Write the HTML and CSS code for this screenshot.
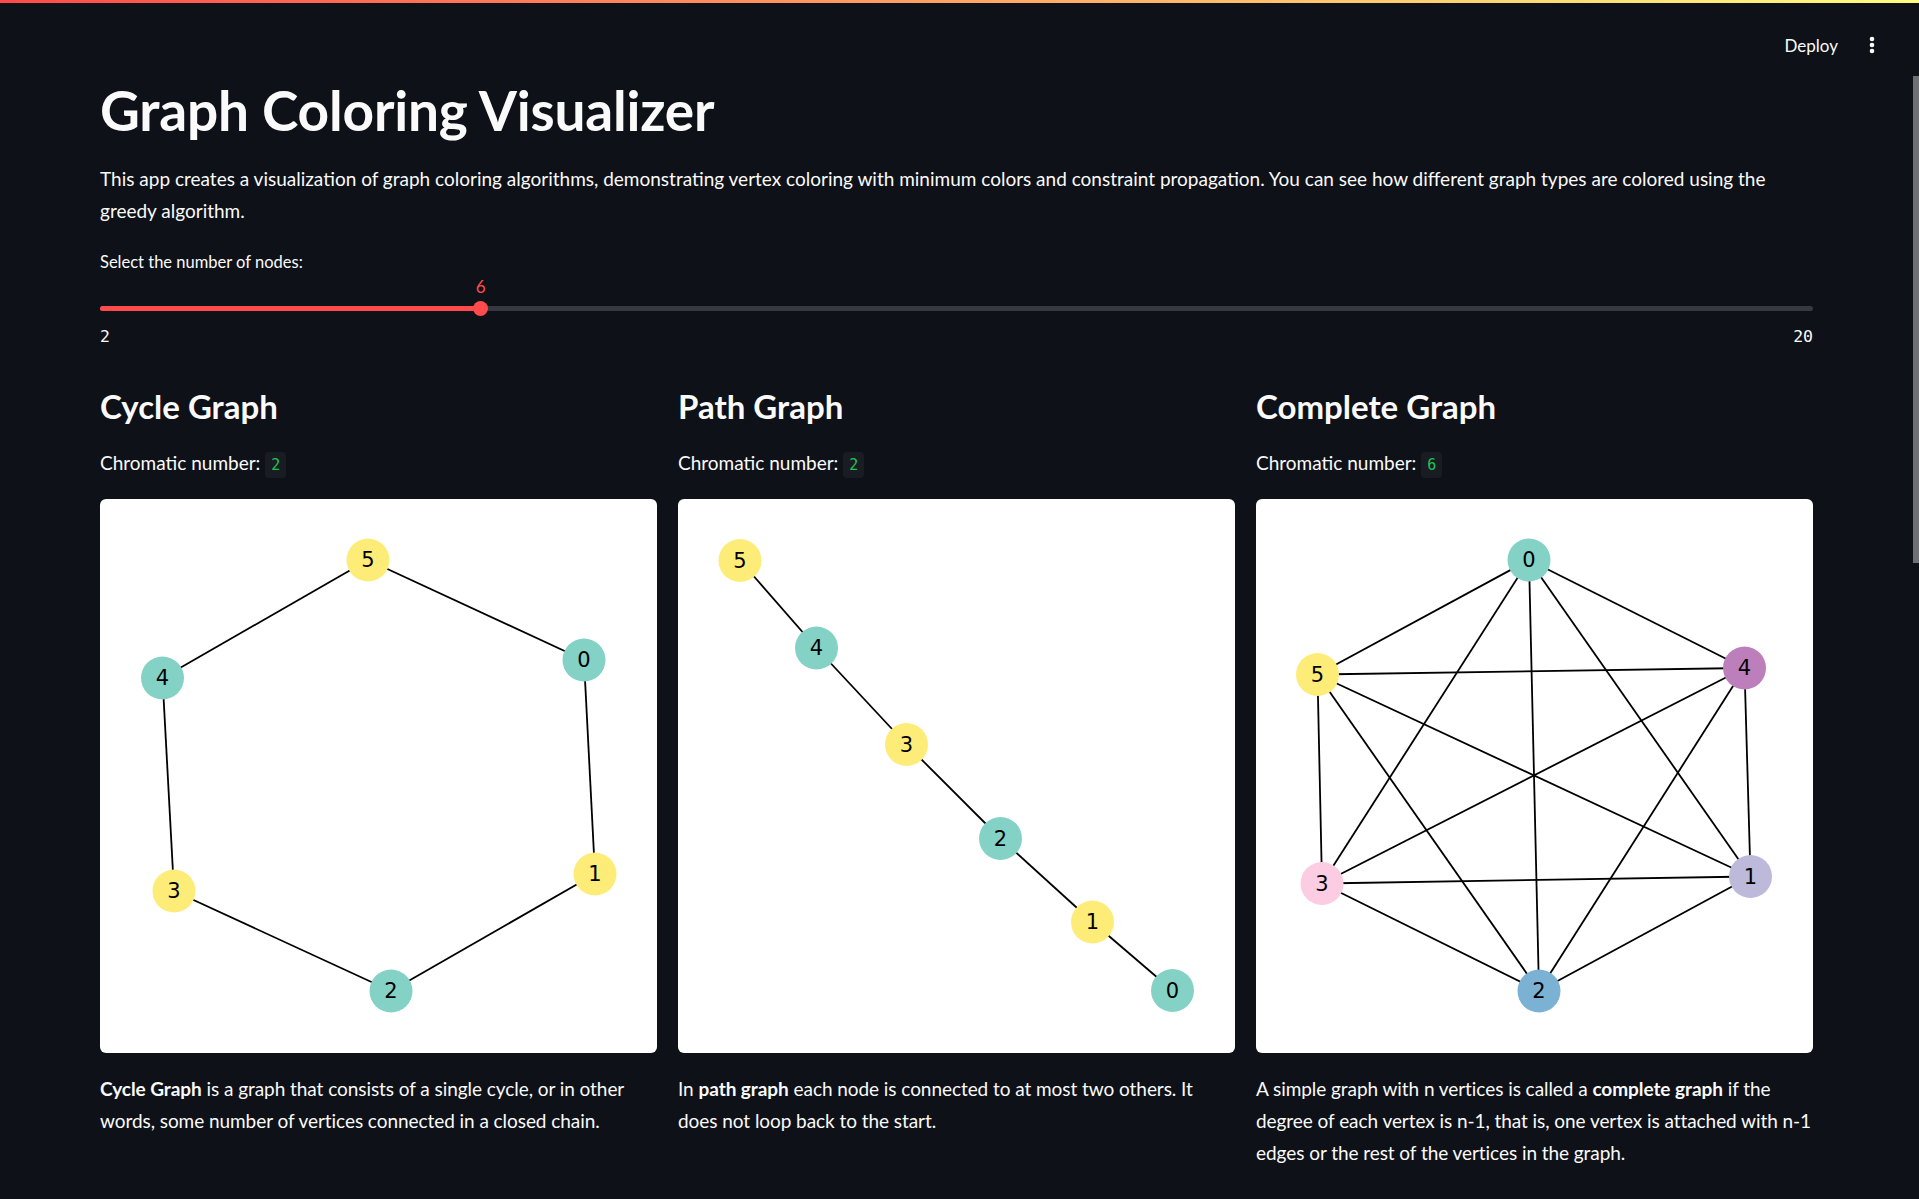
FILE: index.html
```html
<!DOCTYPE html>
<html lang="en">
<head>
<meta charset="utf-8">
<title>Graph Coloring Visualizer</title>
<link rel="stylesheet" href="styles.css">
</head>
<body>
<header class="app-header">
  <div class="decoration"></div>
  <div class="toolbar">
    <span class="deploy">Deploy</span>
    <svg class="menu" width="8" height="20" viewBox="0 0 8 20"><circle cx="4" cy="4" r="2.3" fill="#fafafa"/><circle cx="4" cy="10" r="2.3" fill="#fafafa"/><circle cx="4" cy="16" r="2.3" fill="#fafafa"/></svg>
  </div>
</header>
<div class="scrollbar"></div>
<main class="block">
  <h1 class="title">Graph Coloring Visualizer</h1>
  <p class="intro">This app creates a visualization of graph coloring algorithms, demonstrating vertex coloring with minimum colors and constraint propagation. You can see how different graph types are colored using the greedy algorithm.</p>

  <div class="slider">
    <div class="slider-label">Select the number of nodes:</div>
    <div class="slider-body">
      <div class="track"><div class="fill" style="width:22.22%"></div></div>
      <div class="thumb" style="left:22.22%"></div>
      <div class="thumb-value" style="left:22.22%">6</div>
    </div>
    <div class="ticks"><span>2</span><span>20</span></div>
  </div>

  <div class="columns">
    <section class="col">
      <h3>Cycle Graph</h3>
      <p class="chrom">Chromatic number: <code>2</code></p>
      <div class="card">
        <svg viewBox="0 0 557 554" width="557" height="554">
          <g class="edges">
            <line x1="484" y1="161" x2="495" y2="375"/>
            <line x1="495" y1="375" x2="291" y2="492"/>
            <line x1="291" y1="492" x2="74" y2="392"/>
            <line x1="74" y1="392" x2="62.5" y2="179"/>
            <line x1="62.5" y1="179" x2="268" y2="61"/>
            <line x1="268" y1="61" x2="484" y2="161"/>
          </g>
          <g class="nodes">
            <circle cx="484" cy="161" r="21.5" fill="#84d2c6"/><text x="484" y="161">0</text>
            <circle cx="495" cy="375" r="21.5" fill="#feec78"/><text x="495" y="375">1</text>
            <circle cx="291" cy="492" r="21.5" fill="#84d2c6"/><text x="291" y="492">2</text>
            <circle cx="74" cy="392" r="21.5" fill="#feec78"/><text x="74" y="392">3</text>
            <circle cx="62.5" cy="179" r="21.5" fill="#84d2c6"/><text x="62.5" y="179">4</text>
            <circle cx="268" cy="61" r="21.5" fill="#feec78"/><text x="268" y="61">5</text>
          </g>
        </svg>
      </div>
      <p class="caption"><strong>Cycle Graph</strong> is a graph that consists of a single cycle, or in other words, some number of vertices connected in a closed chain.</p>
    </section>

    <section class="col">
      <h3>Path Graph</h3>
      <p class="chrom">Chromatic number: <code>2</code></p>
      <div class="card">
        <svg viewBox="0 0 557 554" width="557" height="554">
          <g class="edges">
            <line x1="62" y1="61.5" x2="138.5" y2="149"/>
            <line x1="138.5" y1="149" x2="228.5" y2="245.5"/>
            <line x1="228.5" y1="245.5" x2="322.5" y2="339.5"/>
            <line x1="322.5" y1="339.5" x2="414.5" y2="423"/>
            <line x1="414.5" y1="423" x2="494.5" y2="491.5"/>
          </g>
          <g class="nodes">
            <circle cx="494.5" cy="491.5" r="21.5" fill="#84d2c6"/><text x="494.5" y="491.5">0</text>
            <circle cx="414.5" cy="423" r="21.5" fill="#feec78"/><text x="414.5" y="423">1</text>
            <circle cx="322.5" cy="339.5" r="21.5" fill="#84d2c6"/><text x="322.5" y="339.5">2</text>
            <circle cx="228.5" cy="245.5" r="21.5" fill="#feec78"/><text x="228.5" y="245.5">3</text>
            <circle cx="138.5" cy="149" r="21.5" fill="#84d2c6"/><text x="138.5" y="149">4</text>
            <circle cx="62" cy="61.5" r="21.5" fill="#feec78"/><text x="62" y="61.5">5</text>
          </g>
        </svg>
      </div>
      <p class="caption">In <strong>path graph</strong> each node is connected to at most two others. It does not loop back to the start.</p>
    </section>

    <section class="col">
      <h3>Complete Graph</h3>
      <p class="chrom">Chromatic number: <code>6</code></p>
      <div class="card">
        <svg viewBox="0 0 557 554" width="557" height="554">
          <g class="edges">
            <line x1="273" y1="61" x2="494.5" y2="377.5"/>
            <line x1="273" y1="61" x2="283" y2="492"/>
            <line x1="273" y1="61" x2="66" y2="384.5"/>
            <line x1="273" y1="61" x2="488.5" y2="169"/>
            <line x1="273" y1="61" x2="61.5" y2="175.5"/>
            <line x1="494.5" y1="377.5" x2="283" y2="492"/>
            <line x1="494.5" y1="377.5" x2="66" y2="384.5"/>
            <line x1="494.5" y1="377.5" x2="488.5" y2="169"/>
            <line x1="494.5" y1="377.5" x2="61.5" y2="175.5"/>
            <line x1="283" y1="492" x2="66" y2="384.5"/>
            <line x1="283" y1="492" x2="488.5" y2="169"/>
            <line x1="283" y1="492" x2="61.5" y2="175.5"/>
            <line x1="66" y1="384.5" x2="488.5" y2="169"/>
            <line x1="66" y1="384.5" x2="61.5" y2="175.5"/>
            <line x1="488.5" y1="169" x2="61.5" y2="175.5"/>
          </g>
          <g class="nodes">
            <circle cx="273" cy="61" r="21.5" fill="#84d2c6"/><text x="273" y="61">0</text>
            <circle cx="494.5" cy="377.5" r="21.5" fill="#bdb9da"/><text x="494.5" y="377.5">1</text>
            <circle cx="283" cy="492" r="21.5" fill="#7bb2d4"/><text x="283" y="492">2</text>
            <circle cx="66" cy="384.5" r="21.5" fill="#fccce3"/><text x="66" y="384.5">3</text>
            <circle cx="488.5" cy="169" r="21.5" fill="#bd7fbb"/><text x="488.5" y="169">4</text>
            <circle cx="61.5" cy="175.5" r="21.5" fill="#feec78"/><text x="61.5" y="175.5">5</text>
          </g>
        </svg>
      </div>
      <p class="caption">A simple graph with n vertices is called a <strong>complete graph</strong> if the degree of each vertex is n-1, that is, one vertex is attached with <span class="nowrap">n-1</span> edges or the rest of the vertices in the graph.</p>
    </section>
  </div>
</main>
</body>
</html>
```

FILE: styles.css
```css
* { box-sizing: border-box; }

html, body {
  margin: 0;
  padding: 0;
  background: #0e1117;
  color: #fafafa;
  font-family: Lato, "Open Sans", sans-serif;
}

body {
  min-height: 1199px;
  position: relative;
  overflow: hidden;
}

.app-header {
  position: absolute;
  top: 0;
  left: 0;
  right: 0;
  height: 90px;
}

.decoration {
  height: 3px;
  background: linear-gradient(90deg, #ff4b4b, #fffd80);
}

.toolbar {
  display: flex;
  justify-content: flex-end;
  align-items: center;
  height: 84px;
  padding-right: 43px;
  gap: 30px;
}

.deploy {
  font-size: 17px;
  color: #fafafa;
}

.menu { display: block; }

.scrollbar {
  position: absolute;
  right: 0;
  top: 76px;
  width: 6px;
  height: 487px;
  background: #6f7074;
}

.block {
  width: 1713px;
  margin-left: 100px;
  padding-top: 77px;
}

.title {
  margin: 0;
  font-size: 55px;
  line-height: 66px;
  font-weight: 700;
  letter-spacing: -0.2px;
}

.intro {
  margin: 20px 0 0;
  font-size: 19px;
  line-height: 32px;
}

.slider { margin-top: 23px; }

.slider-label {
  font-size: 16.5px;
  line-height: 24px;
}

.slider-body {
  position: relative;
  height: 50px;
  padding-top: 31.5px;
}

.track {
  height: 5px;
  border-radius: 3px;
  background: #373942;
}

.fill {
  height: 5px;
  border-radius: 3px;
  background: #ff4b4b;
}

.thumb {
  position: absolute;
  top: 26.5px;
  width: 15px;
  height: 15px;
  margin-left: -7.5px;
  border-radius: 50%;
  background: #ff4b4b;
}

.thumb-value {
  position: absolute;
  top: 1px;
  width: 30px;
  margin-left: -15px;
  text-align: center;
  font-size: 17px;
  line-height: 24px;
  color: #ff4b4b;
}

.ticks {
  display: flex;
  justify-content: space-between;
  font-family: "DejaVu Sans Mono", monospace;
  font-size: 16.5px;
  line-height: 24px;
  margin-top: 1px;
}

.columns {
  display: grid;
  grid-template-columns: repeat(3, 557px);
  gap: 21px;
  margin-top: 35px;
}

.col h3 {
  margin: 0;
  font-size: 33px;
  line-height: 44px;
  font-weight: 700;
}

.chrom {
  margin: 19px 0 0;
  font-size: 19px;
  line-height: 32px;
}

.chrom code {
  display: inline-block;
  font-family: "DejaVu Sans Mono", monospace;
  font-size: 15px;
  line-height: 26px;
  padding: 0 6px;
  border-radius: 4px;
  background: #1a1c23;
  color: #21c354;
  vertical-align: 0;
}

.card {
  margin-top: 20px;
  height: 554px;
  background: #ffffff;
  border-radius: 6px;
  overflow: hidden;
}

.card svg { display: block; }

.edges line {
  stroke: #000;
  stroke-width: 1.8;
}

.nodes text {
  font-family: "DejaVu Sans", sans-serif;
  font-size: 21px;
  fill: #000;
  text-anchor: middle;
  dominant-baseline: central;
}

.caption {
  margin: 20px 0 0;
  font-size: 19px;
  line-height: 32px;
  letter-spacing: -0.06px;
}

.caption strong { font-weight: 700; }

.nowrap { white-space: nowrap; }
```
